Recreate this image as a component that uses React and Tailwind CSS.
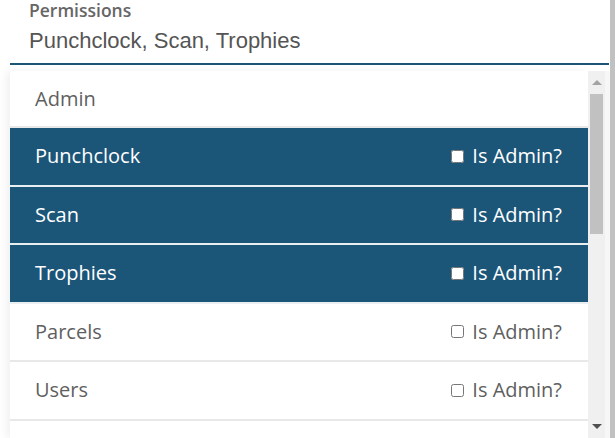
import React from "react";

const rows = [
  { name: "Admin", selected: false, admin: false },
  { name: "Punchclock", selected: true, admin: true },
  { name: "Scan", selected: true, admin: true },
  { name: "Trophies", selected: true, admin: true },
  { name: "Parcels", selected: false, admin: true },
  { name: "Users", selected: false, admin: true },
];

const Row = ({ row, first }) => (
  <div
    className={
      "shrink-0 flex items-center justify-between pl-[25px] pr-[26px] border-b-2 " +
      (first ? "h-[57px] " : "h-[58.5px] ") +
      (row.selected
        ? "bg-[#1b5679] text-white border-[#e9eef1]"
        : "bg-white text-[#5f5f5f] border-[#e8e8e8]")
    }
  >
    <span className="text-[20px] leading-none">{row.name}</span>
    {row.admin && (
      <label className="flex items-center gap-[8px] text-[20px] leading-none">
        <input type="checkbox" className="w-[13px] h-[13px] m-0" />
        <span>Is Admin?</span>
      </label>
    )}
  </div>
);

export default function App() {
  return (
    <div
      className="flex w-[615px] h-[438px] overflow-hidden bg-white"
      style={{ fontFamily: '"Open Sans", "Noto Sans", sans-serif' }}
    >
      <div className="flex-1 flex flex-col">
        <div className="pl-[29px]">
          <div className="text-[17.5px] leading-[21px] font-semibold text-[#666]">
            Permissions
          </div>
          <div
            className="mt-[8px] text-[22px] leading-[24px] text-[#555]"
            style={{ fontFamily: '"Liberation Sans", Arial, sans-serif' }}
          >
            Punchclock, Scan, Trophies
          </div>
        </div>
        <div className="mt-[10px] ml-[10px] w-[599px] h-[2px] bg-[#1b5679]" />
        <div className="mt-[6px] ml-[10px] flex flex-1 min-h-0">
          <div className="flex-1 flex flex-col bg-white rounded-t-[4px] shadow-[-4px_0_8px_rgba(0,0,0,0.06)] overflow-hidden">
            {rows.map((row, i) => (
              <Row key={row.name} row={row} first={i === 0} />
            ))}
            <div className="shrink-0 h-[58px] bg-white" />
          </div>
          <div className="w-[17px] bg-[#f0f0f0] flex flex-col items-center">
            <div className="h-[23px] w-full flex items-center justify-center">
              <div className="w-0 h-0 border-l-[5px] border-r-[5px] border-b-[5px] border-l-transparent border-r-transparent border-b-[#a3a3a3]" />
            </div>
            <div className="w-[13px] h-[140px] bg-[#c1c1c1]" />
            <div className="flex-1" />
            <div className="h-[14px] w-full flex items-start justify-center">
              <div className="w-0 h-0 border-l-[5px] border-r-[5px] border-t-[5px] border-l-transparent border-r-transparent border-t-[#505050]" />
            </div>
          </div>
          <div className="w-[5px] bg-[#f7f7f7]" />
        </div>
      </div>
      <div className="w-[5px] h-full bg-[#c1c1c1]" />
    </div>
  );
}
